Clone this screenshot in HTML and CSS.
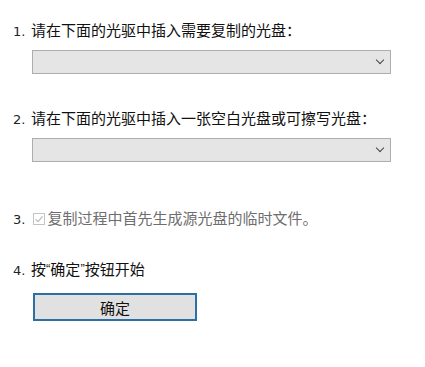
FILE: index.html
```html
<!DOCTYPE html>
<html lang="zh">
<head>
    <meta charset="UTF-8">
    <meta name="viewport" content="width=device-width, initial-scale=1.0">
    <title>复制光盘</title>
    <link rel="stylesheet" href="styles.css">
</head>
<body>
    <div class="wizard">
        <div class="step step-1">
            <span class="num">1.</span>请在下面的光驱中插入需要复制的光盘：
        </div>
        <div class="drive-select"><span class="chevron"></span></div>

        <div class="step step-2">
            <span class="num">2.</span>请在下面的光驱中插入一张空白光盘或可擦写光盘：
        </div>
        <div class="drive-select"><span class="chevron"></span></div>

        <div class="step step-3 disabled">
            <span class="num">3.</span>
            <span class="check">
                <svg width="12" height="12" viewBox="0 0 12 12">
                    <rect x="0.5" y="0.5" width="11" height="11" fill="#fff" stroke="#c4c4c4"/>
                    <path d="M2.5 6.2 L5 8.6 L9.6 3.4" fill="none" stroke="#b8b8b8" stroke-width="1.1"/>
                </svg>
            </span>复制过程中首先生成源光盘的临时文件。
        </div>

        <div class="step step-4">
            <span class="num">4.</span>按<span class="quote">“</span>确定<span class="quote">”</span>按钮开始
        </div>
        <button class="ok-button">确定</button>
    </div>
</body>
</html>
```

FILE: styles.css
```css
* {
    margin: 0;
    padding: 0;
    box-sizing: border-box;
}
body {
    font-family: "Noto Sans CJK SC", "Microsoft YaHei", sans-serif;
    font-size: 15px;
    color: #111;
    background-color: #fff;
}
.wizard {
    display: flex;
    flex-direction: column;
    align-items: flex-start;
    padding: 20px 0 0 13px;
}
.step {
    height: 20px;
    line-height: 20px;
    white-space: nowrap;
}
.num {
    display: inline-block;
    width: 18px;
    font-family: "DejaVu Sans", sans-serif;
    font-size: 13px;
    color: #222;
}
.quote {
    font-family: "Liberation Sans", sans-serif;
    font-size: 13px;
    vertical-align: 2px;
}
.step-2 {
    margin-top: 34px;
}
.step-3 {
    margin-top: 46px;
}
.step-4 {
    margin-top: 31px;
}
.disabled {
    color: #6e6e6e;
}
.check {
    display: inline-block;
    margin-right: 2px;
    vertical-align: -1px;
}
.check svg {
    display: block;
}
.step-3 .num {
    width: 17px;
}
.drive-select {
    position: relative;
    width: 359px;
    height: 24px;
    margin: 10px 0 0 19px;
    background-color: #e5e5e5;
    border: 1px solid #adadad;
}
.step-2 + .drive-select {
    margin-top: 10px;
}
.chevron {
    position: absolute;
    right: 7px;
    top: 6px;
    width: 6px;
    height: 6px;
    border-right: 1px solid #444;
    border-bottom: 1px solid #444;
    transform: rotate(45deg);
}
.ok-button {
    width: 164px;
    height: 28px;
    margin: 14px 0 0 20px;
    font-family: "Noto Sans CJK SC", sans-serif;
    font-size: 15px;
    color: #111;
    background-color: #e1e1e1;
    border: 2px solid #2b6fa3;
    cursor: pointer;
}
```
